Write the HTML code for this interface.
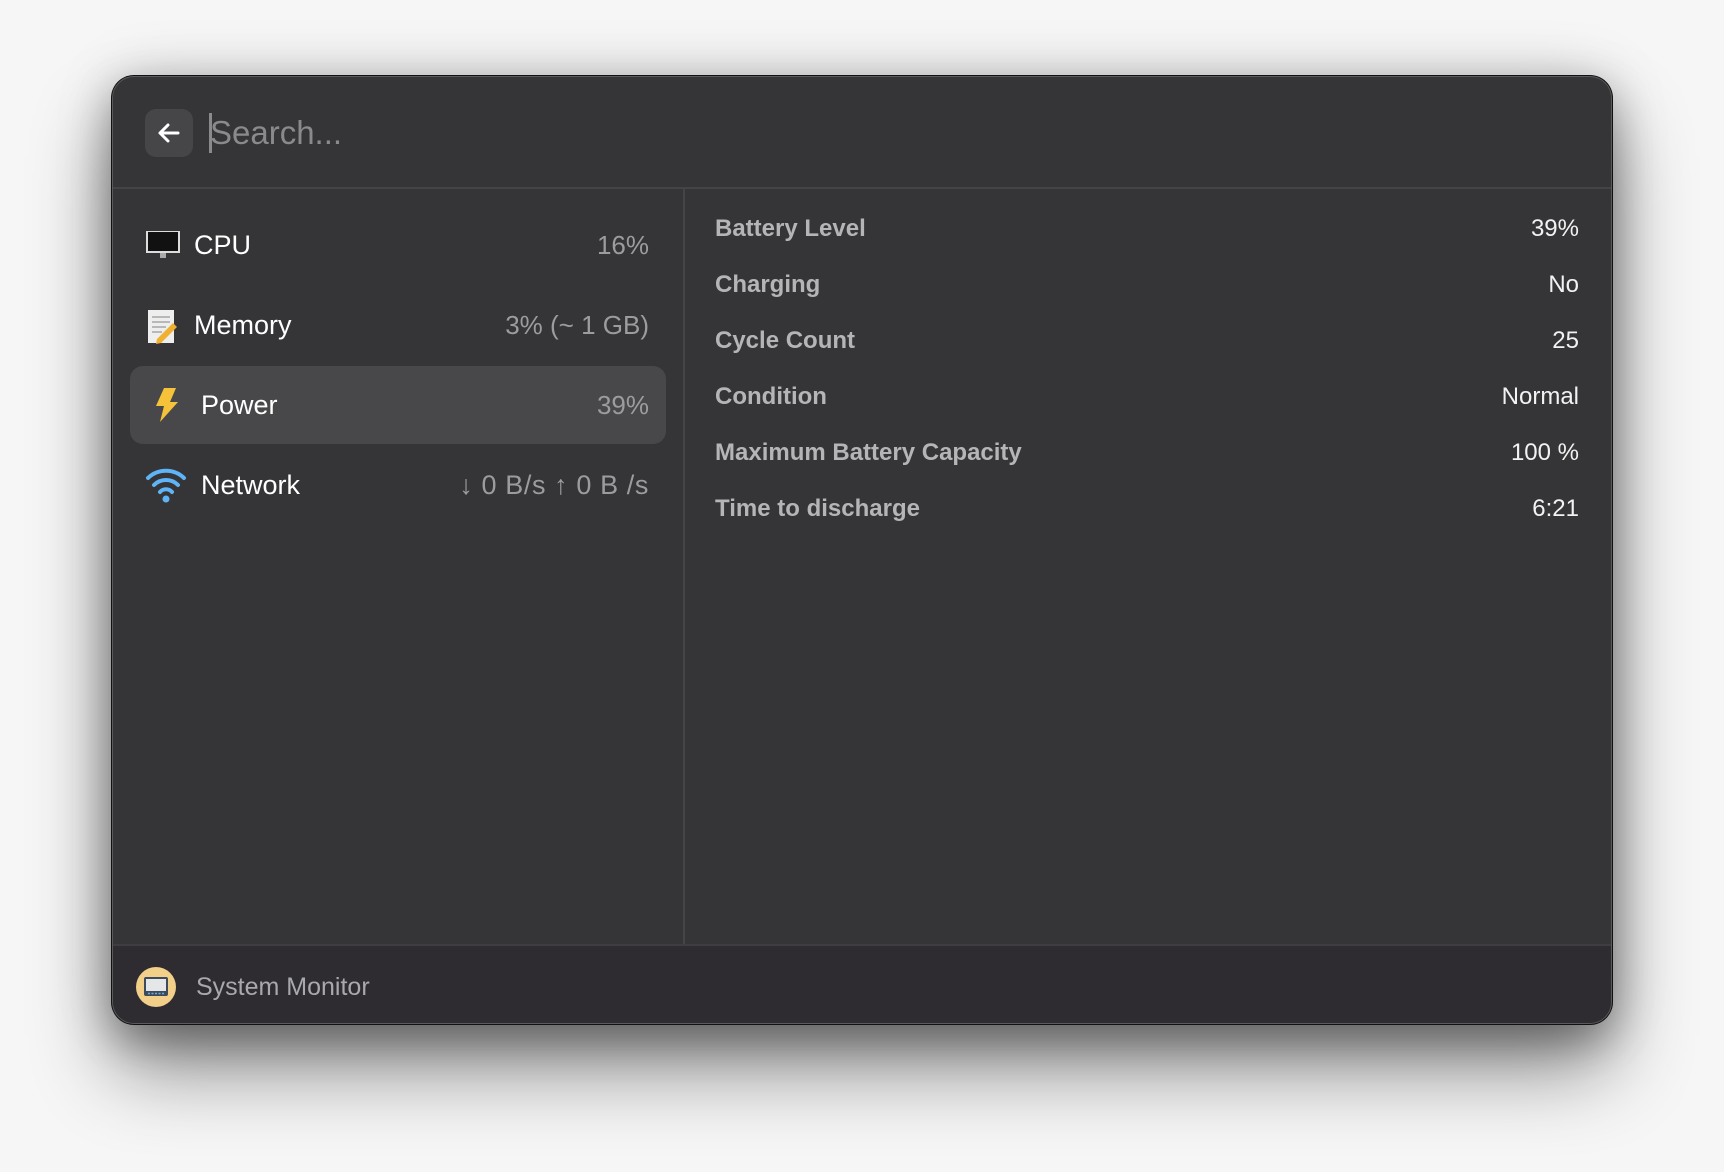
<!DOCTYPE html>
<html><head><meta charset="utf-8"><style>
*{margin:0;padding:0;box-sizing:border-box}
body{width:1724px;height:1172px;background:#f6f6f6;font-family:"Liberation Sans",sans-serif;position:relative;overflow:hidden}
.win{position:absolute;left:112px;top:76px;width:1500px;height:948px;background:#353537;border-radius:22px;border:1.5px solid #5a5a5c;box-shadow:0 0 0 1px #111,0 45px 80px rgba(0,0,0,.45),0 15px 40px rgba(0,0,0,.25),0 0 60px rgba(0,0,0,.15);overflow:hidden}
.hdiv{position:absolute;left:0;right:0;top:110px;height:2px;background:#444446}
.back{position:absolute;left:32px;top:32px;width:48px;height:48px;border-radius:11px;background:#464648}
.search{position:absolute;left:97px;top:34px;font-size:33px;color:#8a8a8c;line-height:44px}
.cursor{position:absolute;left:96px;top:36px;width:3px;height:40px;background:#8a8a8c}
.vdiv{position:absolute;left:570px;top:112px;width:2px;height:756px;background:#444446}
.footer{position:absolute;left:0;right:0;top:867px;bottom:0;background:#2e2c31;border-top:2px solid #3e3d41}
.row{position:absolute;left:17px;width:536px;height:78px;border-radius:13px}
.row.sel{background:#48484a}
.row .t{position:absolute;left:64px;top:0;line-height:78px;font-size:27px;color:#fff}
.row .v{position:absolute;right:17px;top:0;line-height:78px;font-size:26px;color:#9c9c9e}
.ico{position:absolute;left:15px;top:23px}
.lab{position:absolute;left:602px;font-size:24px;font-weight:600;color:#b5b5b7}
.val{position:absolute;right:32px;font-size:24px;color:#f2f2f2}
</style></head><body>
<div class="win">
 <div class="back"><svg width="48" height="48" viewBox="0 0 48 48"><path d="M33 24H15M23 16l-8 8 8 8" stroke="#fff" stroke-width="3" fill="none" stroke-linecap="round" stroke-linejoin="round"/></svg></div>
 <div class="cursor"></div>
 <div class="search">Search...</div>
 <div class="hdiv"></div>
 <div class="vdiv"></div>

 <div class="row" style="top:129px">
  <svg class="ico" width="36" height="32" viewBox="0 0 36 32"><rect x="1" y="2" width="34" height="22" fill="#ddd"/><rect x="3" y="3" width="30" height="19" fill="#111"/><rect x="15" y="24" width="6" height="5" fill="#aaa"/></svg>
  <div class="t" style="left:64px">CPU</div><div class="v">16%</div></div>
 <div class="row" style="top:209px">
  <svg class="ico" width="34" height="36" viewBox="0 0 34 36"><rect x="3" y="1" width="26" height="33" fill="#eee"/><path d="M7 8h18M7 13h18M7 18h14M7 23h10" stroke="#999" stroke-width="1.3"/><path d="M12 30l16-16 4 4-16 16-5 1z" fill="#f0b030"/></svg>
  <div class="t">Memory</div><div class="v">3% (~ 1 GB)</div></div>
 <div class="row sel" style="top:289px">
  <svg class="ico" style="left:22px;top:20px" width="30" height="38" viewBox="0 0 30 38"><path d="M12 2h12l-6 14h8L8 36l4-16H4z" fill="#f5c23a"/></svg>
  <div class="t" style="left:71px">Power</div><div class="v">39%</div></div>
 <div class="row" style="top:369px">
  <svg class="ico" style="top:19px" width="42" height="38" viewBox="0 0 42 38"><g fill="none" stroke="#5eb4f6" stroke-width="4" stroke-linecap="round"><path d="M3 13a26 26 0 0 1 36 0"/><path d="M9 20a17 17 0 0 1 24 0"/><path d="M15 27a8 8 0 0 1 12 0"/></g><circle cx="21" cy="34" r="3.5" fill="#5eb4f6"/></svg>
  <div class="t" style="left:71px">Network</div><div class="v" style="font-size:27px;letter-spacing:0.6px">↓ 0 B/s ↑ 0 B /s</div></div>

 <div class="lab" style="top:138px">Battery Level</div><div class="val" style="top:138px">39%</div>
 <div class="lab" style="top:194px">Charging</div><div class="val" style="top:194px">No</div>
 <div class="lab" style="top:250px">Cycle Count</div><div class="val" style="top:250px">25</div>
 <div class="lab" style="top:306px">Condition</div><div class="val" style="top:306px">Normal</div>
 <div class="lab" style="top:362px">Maximum Battery Capacity</div><div class="val" style="top:362px">100 %</div>
 <div class="lab" style="top:418px">Time to discharge</div><div class="val" style="top:418px">6:21</div>

 <div class="footer">
  <svg style="position:absolute;left:22px;top:20px" width="42" height="42" viewBox="0 0 42 42"><circle cx="21" cy="21" r="20" fill="#f2d08a"/><rect x="9" y="11" width="24" height="19" rx="2" fill="#3d4b5c"/><rect x="11" y="13" width="20" height="12" fill="#e4e6e8"/><path d="M13 27.5h16" stroke="#6ab0d8" stroke-width="1.5" stroke-dasharray="2 1.5"/></svg>
  <div style="position:absolute;left:83px;top:20px;line-height:42px;font-size:25px;color:#a9a9ab">System Monitor</div>
 </div>
</div>
</body></html>
